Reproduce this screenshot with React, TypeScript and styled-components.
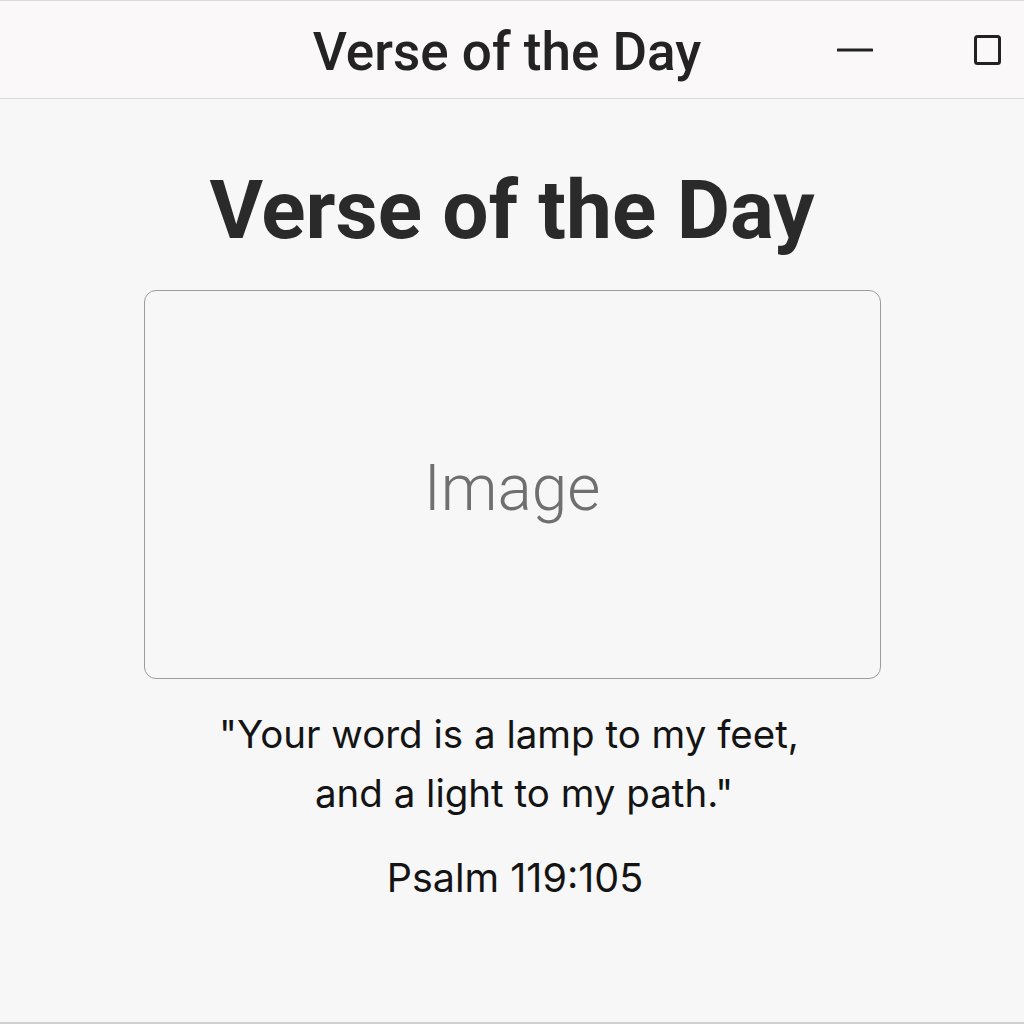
import React from "react";
import styled, { createGlobalStyle } from "styled-components";

const GlobalStyle = createGlobalStyle`
  html, body {
    margin: 0;
    padding: 0;
    background: #f7f7f7;
  }
  body {
    font-family: Inter, Roboto, "Liberation Sans", Arial, sans-serif;
    color: #222222;
  }
`;

const Window = styled.div`
  width: 1024px;
  height: 1024px;
  box-sizing: border-box;
  border-top: 1px solid #d9d9d9;
  border-bottom: 2px solid #cfcfcf;
  background: #f7f7f7;
  display: flex;
  flex-direction: column;
`;

const TitleBar = styled.header`
  height: 98px;
  box-sizing: border-box;
  padding-top: 6px;
  background: #faf8f8;
  border-bottom: 1px solid #d8d8d8;
  display: grid;
  grid-template-columns: 1fr auto 1fr;
  align-items: center;
`;

const TitleText = styled.h2`
  grid-column: 2;
  margin: 0 10px 0 0;
  font-family: Roboto, "Liberation Sans", sans-serif;
  font-weight: 500;
  font-size: 53px;
  line-height: 1;
  color: #232323;
`;

const Controls = styled.div`
  grid-column: 3;
  justify-self: end;
  display: flex;
  align-items: center;
  gap: 101px;
  padding-right: 23px;
  margin-top: -6px;
`;

const ControlButton = styled.button`
  border: none;
  background: transparent;
  padding: 0;
  display: flex;
  align-items: center;
  justify-content: center;
  cursor: pointer;
`;

const Main = styled.main`
  flex: 1;
  display: flex;
  flex-direction: column;
  align-items: center;
  padding-top: 70px;
`;

const Heading = styled.h1`
  margin: 0 0 39px;
  font-family: Roboto, "Liberation Sans", sans-serif;
  font-weight: 700;
  font-size: 82px;
  line-height: 1;
  color: #2a2a2a;
`;

const ImageBox = styled.div`
  width: 737px;
  height: 389px;
  box-sizing: border-box;
  border: 1px solid #9c9c9c;
  border-radius: 12px;
  display: flex;
  align-items: center;
  justify-content: center;
  padding-top: 9px;
`;

const ImageLabel = styled.span`
  font-family: Roboto, sans-serif;
  font-weight: 300;
  font-size: 64px;
  line-height: 1;
  color: #6f6f6f;
`;

const Quote = styled.blockquote`
  margin: 26px 0 0;
  display: flex;
  flex-direction: column;
  align-items: center;
  font-family: Inter, Roboto, sans-serif;
  font-weight: 400;
  font-size: 38.5px;
  line-height: 59px;
  color: #141414;
`;

const QuoteLine = styled.span<{ $offset?: number }>`
  display: block;
  position: relative;
  left: ${(p) => p.$offset ?? 0}px;
`;

const Citation = styled.p`
  margin: 26px 0 0;
  font-family: Inter, Roboto, sans-serif;
  font-weight: 400;
  font-size: 39.5px;
  line-height: 59px;
  color: #141414;
  position: relative;
  left: 3px;
`;

const MinimizeIcon = () => (
  <svg width="36" height="6" viewBox="0 0 36 6">
    <line x1="1" y1="3" x2="35" y2="3" stroke="#222" strokeWidth="3" strokeLinecap="round" />
  </svg>
);

const MaximizeIcon = () => (
  <svg width="27" height="30" viewBox="0 0 27 30">
    <rect x="1.5" y="1.5" width="24" height="27" rx="2" fill="none" stroke="#222" strokeWidth="3" />
  </svg>
);

export default function App() {
  return (
    <>
      <GlobalStyle />
      <Window>
        <TitleBar>
          <TitleText>Verse of the Day</TitleText>
          <Controls>
            <ControlButton aria-label="Minimize">
              <MinimizeIcon />
            </ControlButton>
            <ControlButton aria-label="Maximize">
              <MaximizeIcon />
            </ControlButton>
          </Controls>
        </TitleBar>
        <Main>
          <Heading>Verse of the Day</Heading>
          <ImageBox>
            <ImageLabel>Image</ImageLabel>
          </ImageBox>
          <Quote>
            <QuoteLine $offset={-3}>"Your word is a lamp to my feet,</QuoteLine>
            <QuoteLine $offset={12}>and a light to my path."</QuoteLine>
          </Quote>
          <Citation>Psalm 119:105</Citation>
        </Main>
      </Window>
    </>
  );
}
